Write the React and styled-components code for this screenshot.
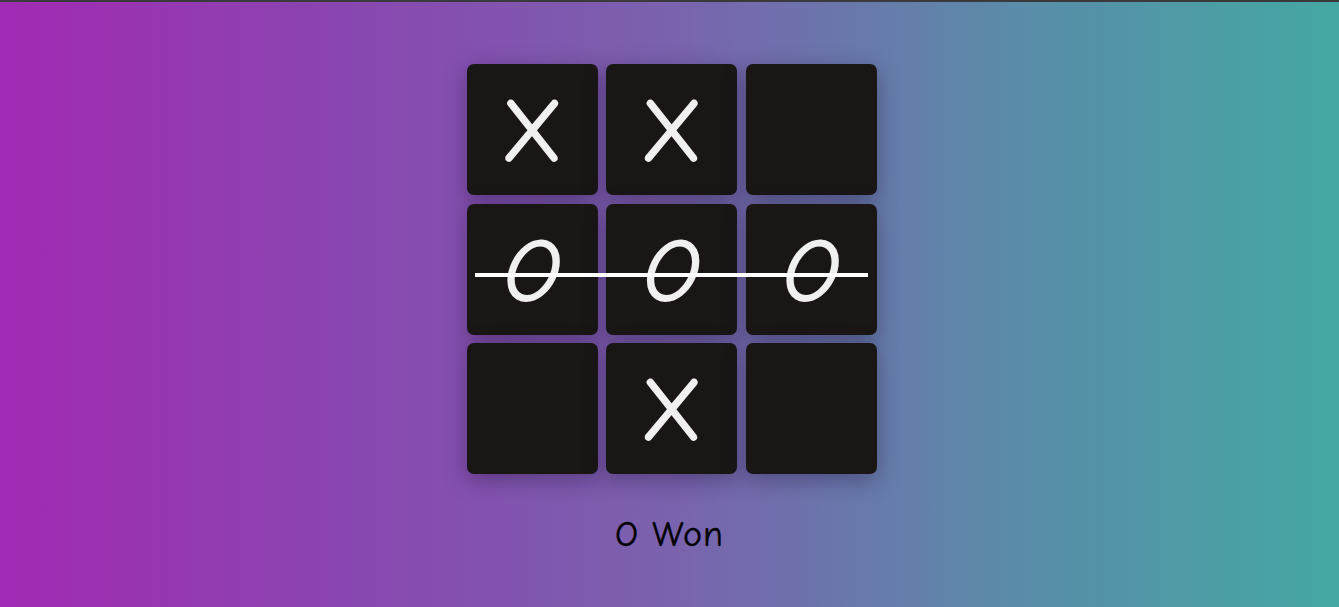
import React from "react";
import styled, { createGlobalStyle } from "styled-components";

const Global = createGlobalStyle`
  html, body { margin: 0; padding: 0; }
  body {
    font-family: "Comic Sans MS", "Comic Neue", Lato, "Open Sans", sans-serif;
  }
`;

const Page = styled.div`
  box-sizing: border-box;
  width: 100%;
  height: 607px;
  border-top: 2px solid #3a3a3c;
  background: linear-gradient(90deg, #a22ab4 0%, #8a45b0 25%, #7a62ae 50%, #5a8ca9 76%, #44a8a2 100%);
  display: flex;
  flex-direction: column;
  align-items: center;
  padding-top: 62px;
`;

const Board = styled.div`
  position: relative;
  display: grid;
  grid-template-columns: repeat(3, 131px);
  grid-template-rows: repeat(3, 131px);
  gap: 8.5px 8.5px;
  margin-left: 4px;
`;

const Cell = styled.div`
  background: #1a1616;
  border-radius: 7px;
  box-shadow: 0 6px 22px rgba(20, 10, 40, 0.35);
  display: flex;
  align-items: center;
  justify-content: center;
  color: #f0f0f0;
  font-family: "Comic Sans MS", "Comic Neue", Lato, "Open Sans", sans-serif;
  font-size: 88px;
  font-weight: 400;
  line-height: 1;
  font-style: ${(p) => (p.$mark === "O" ? "italic" : "normal")};
  padding-top: 7px;
  box-sizing: border-box;
  -webkit-text-stroke: 1.8px #f0f0f0;
`;

const Strike = styled.div`
  position: absolute;
  left: 8px;
  top: 209px;
  width: 393px;
  height: 4px;
  background: #ffffff;
`;

const Status = styled.div`
  margin-top: 40px;
  font-family: "Comic Sans MS", "Comic Neue", Lato, "Open Sans", sans-serif;
  font-size: 36px;
  font-weight: 400;
  color: #000;
  letter-spacing: 1px;
  -webkit-text-stroke: 0.4px #000;
`;

const cells = ["X", "X", "", "O", "O", "O", "", "X", ""];

export default function App() {
  return (
    <>
      <Global />
      <Page>
        <Board>
          {cells.map((c, i) => (
            <Cell key={i} $mark={c}>
              {c}
            </Cell>
          ))}
          <Strike />
        </Board>
        <Status>O Won</Status>
      </Page>
    </>
  );
}
